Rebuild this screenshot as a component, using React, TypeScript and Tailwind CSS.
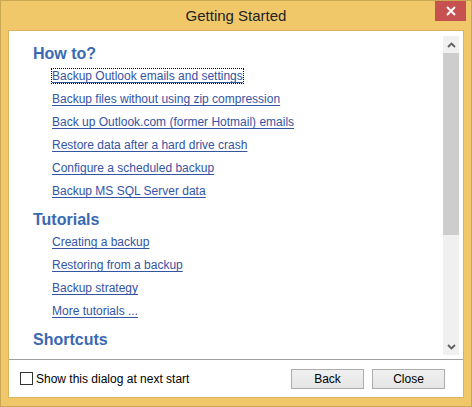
import React, { FC } from "react";

const howTo = [
  "Backup Outlook emails and settings",
  "Backup files without using zip compression",
  "Back up Outlook.com (former Hotmail) emails",
  "Restore data after a hard drive crash",
  "Configure a scheduled backup",
  "Backup MS SQL Server data",
];

const tutorials = [
  "Creating a backup",
  "Restoring from a backup",
  "Backup strategy",
  "More tutorials ...",
];

const Chevron: FC<{ down?: boolean }> = ({ down }) => (
  <svg width="9" height="6" viewBox="0 0 9 6" className="block">
    <polyline
      points={down ? "1,1 4.5,4.5 8,1" : "1,5 4.5,1.5 8,5"}
      fill="none"
      stroke="#606060"
      strokeWidth="1.8"
    />
  </svg>
);

const Section: FC<{ title: string; links: string[]; first?: boolean }> = ({
  title,
  links,
  first,
}) => (
  <div className={first ? "" : "mt-[6px]"}>
    <h2 className="text-[16px] leading-[22px] font-bold text-[#3a69b3]">
      {title}
    </h2>
    <ul className="pl-[19px]">
      {links.map((l, i) => (
        <li key={l} className="text-[12px] leading-[23px]">
          <a
            href="#"
            className={
              "text-[#3454a4] underline underline-offset-[2px] " +
              (first && i === 0 ? "outline outline-1 outline-dotted outline-black" : "")
            }
          >
            {l}
          </a>
        </li>
      ))}
    </ul>
  </div>
);

export default function App() {
  return (
    <div
      className="w-[472px] h-[407px] bg-[#f0c86a] border border-[#c9a653] flex flex-col"
      style={{ fontFamily: '"Liberation Sans", Arial, sans-serif' }}
    >
      <div className="h-[29px] relative flex items-center justify-center">
        <span className="text-[15px] text-[#222] pt-[1px]">Getting Started</span>
        <button className="absolute right-[5px] top-0 w-[31px] h-[20px] bg-[#c75050] flex items-center justify-center">
          <svg width="10" height="10" viewBox="0 0 10 10">
            <path d="M1 1L9 9M9 1L1 9" stroke="white" strokeWidth="2" />
          </svg>
        </button>
      </div>
      <div className="flex-1 mx-[7px] mb-[8px] bg-white border border-[#d8b45e] flex flex-col">
        <div className="h-[328px] flex">
          <div className="flex-1 pl-[24px] pt-[12px] overflow-hidden">
            <Section title="How to?" links={howTo} first />
            <Section title="Tutorials" links={tutorials} />
            <Section title="Shortcuts" links={[]} />
          </div>
          <div className="w-[16px] mt-[5px] mb-[4px] mr-[4px] bg-[#f0f0f0] flex flex-col">
            <div className="h-[17px] flex items-center justify-center">
              <Chevron />
            </div>
            <div className="h-[182px] bg-[#cdcdcd]" />
            <div className="flex-1" />
            <div className="h-[17px] flex items-center justify-center">
              <Chevron down />
            </div>
          </div>
        </div>
        <div className="h-px bg-[#a0a0a0]" />
        <div className="flex-1 flex items-center justify-between pl-[11px] pr-[18px]">
          <label className="flex items-center gap-[3px] text-[12px] text-black">
            <span className="w-[13px] h-[13px] border border-[#333] bg-white" />
            Show this dialog at next start
          </label>
          <div className="flex gap-[8px]">
            <button className="w-[73px] h-[20px] border border-[#acacac] bg-gradient-to-b from-[#f0f0f0] to-[#e5e5e5] text-[12px] text-black">
              Back
            </button>
            <button className="w-[73px] h-[20px] border border-[#acacac] bg-gradient-to-b from-[#f0f0f0] to-[#e5e5e5] text-[12px] text-black">
              Close
            </button>
          </div>
        </div>
      </div>
    </div>
  );
}
